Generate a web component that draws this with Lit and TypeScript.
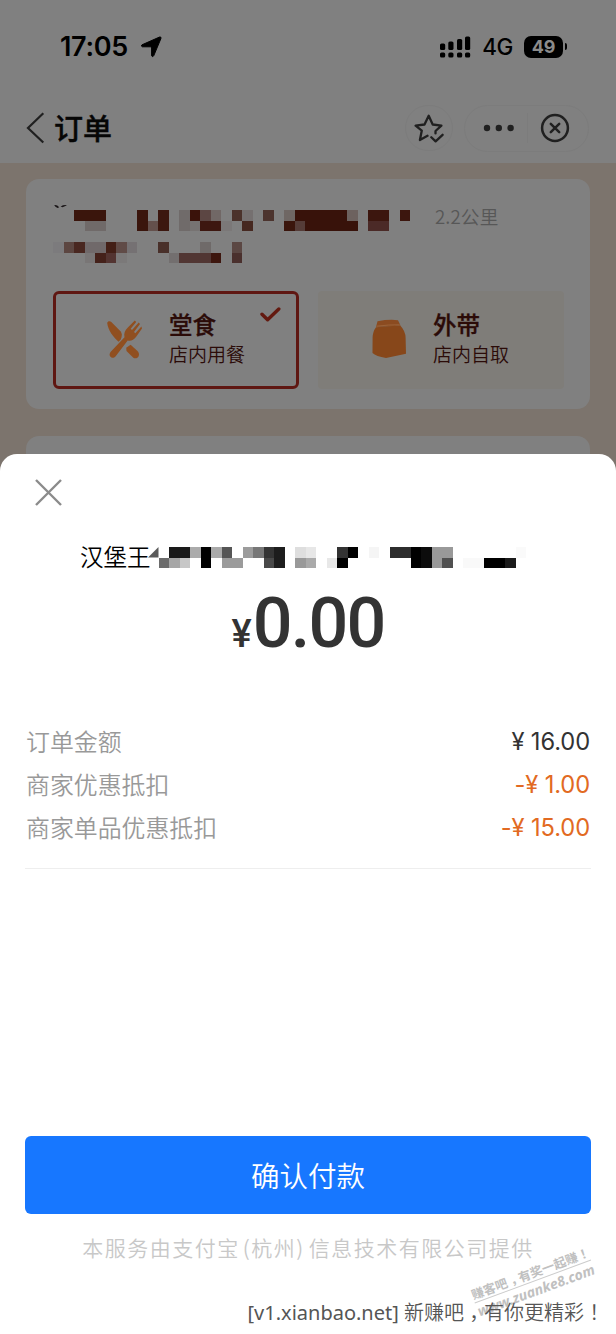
import { LitElement, html, css, svg } from "lit";
import { customElement, property } from "lit/decorators.js";

type Cell = [number, number, number, string];

const CELL = 10.5;

// Each cell: column, row, span in columns, fill.
const ADDRESS_TOP: Cell[] = [
  [2, 0, 3, "#3a150c"], [8, 0, 1, "#3a150c"], [10, 0, 1, "#3c170f"], [12, 0, 1, "#706b6a"],
  [13, 0, 1, "#3a120a"], [14, 0, 1, "#5c4643"], [15, 0, 1, "#716866"], [17, 0, 1, "#4b322b"],
  [18, 0, 1, "#757070"], [20, 0, 1, "#4c342e"], [22, 0, 1, "#6f6764"], [23, 0, 5, "#38120a"],
  [28, 0, 1, "#6d625f"], [30, 0, 2, "#3c160e"], [33, 0, 1, "#3c160e"],
  [3, 1, 2, "#706a69"], [8, 1, 1, "#3a150c"], [9, 1, 1, "#64504c"], [10, 1, 1, "#3c170f"],
  [12, 1, 1, "#706b6a"], [13, 1, 1, "#777372"], [14, 1, 2, "#3d1710"], [16, 1, 1, "#7b7878"],
  [18, 1, 1, "#462820"], [22, 1, 1, "#3a150c"], [23, 1, 1, "#553c38"], [24, 1, 5, "#38120a"],
  [30, 1, 2, "#4b2a27"],
];
const ADDRESS_BOTTOM: Cell[] = [
  [0, 0, 1, "#7c7b7d"], [1, 0, 1, "#5c4641"], [2, 0, 1, "#492720"], [3, 0, 2, "#70696a"],
  [5, 0, 1, "#431f16"], [6, 0, 1, "#604b47"], [7, 0, 1, "#757173"], [10, 0, 1, "#49302a"],
  [14, 0, 1, "#6f6a69"], [17, 0, 1, "#5b4743"],
  [3, 1, 1, "#797676"], [4, 1, 1, "#44211a"], [5, 1, 1, "#533431"], [6, 1, 1, "#7b7979"],
  [11, 1, 1, "#736f6f"], [12, 1, 3, "#513633"], [15, 1, 1, "#3d160e"], [17, 1, 1, "#4a302d"],
];
const SHOP_NAME: Cell[] = [
  [2, 0, 2, "#1a1a1a"], [4, 0, 1, "#ababab"], [5, 0, 1, "#000"], [6, 0, 1, "#aaa"],
  [7, 0, 1, "#555"], [9, 0, 1, "#9c9c9c"], [10, 0, 1, "#777"], [11, 0, 1, "#343434"],
  [12, 0, 1, "#1d1d1d"], [14, 0, 1, "#dedede"], [15, 0, 1, "#e7e7e7"], [18, 0, 1, "#333"],
  [19, 0, 1, "#000"], [21, 0, 1, "#f5f5f5"], [23, 0, 2, "#2d2d2d"], [25, 0, 1, "#000"],
  [26, 0, 1, "#0c0c0c"], [27, 0, 2, "#999"], [35, 0, 1, "#fafafa"],
  [1, 1, 1, "#6c6c6c"], [2, 1, 1, "#a6a6a6"], [3, 1, 1, "#c7c7c7"], [5, 1, 1, "#000"],
  [7, 1, 2, "#9b9b9b"], [11, 1, 1, "#494949"], [12, 1, 1, "#1d1d1d"], [14, 1, 1, "#999"],
  [15, 1, 1, "#aaa"], [17, 1, 1, "#e8e8e8"], [18, 1, 1, "#000"], [25, 1, 1, "#000"],
  [26, 1, 1, "#0c0c0c"], [27, 1, 1, "#999"], [28, 1, 1, "#505050"], [30, 1, 2, "#f9f9f9"],
  [32, 1, 2, "#000"], [34, 1, 1, "#1b1b1b"],
];

const cells = (list: Cell[]) =>
  list.map(
    ([c, r, n, fill]) =>
      svg`<rect x=${c * CELL} y=${r * CELL} width=${n * CELL} height=${CELL} fill=${fill}></rect>`
  );

@customElement("status-bar")
class StatusBar extends LitElement {
  static styles = css`
    :host { display: flex; align-items: center; height: 93px; box-sizing: border-box; padding: 0 49.5px 0 60px; color: #000; font-family: Inter, sans-serif; }
    .time { font-size: 27px; font-weight: 600; letter-spacing: -0.3px; }
    .arrow { margin-left: 12px; }
    .signal { margin-left: auto; }
    .net { margin-left: 11px; font-size: 22.5px; font-weight: 500; letter-spacing: -0.4px; }
    .battery { margin-left: 11px; width: 39px; height: 22px; line-height: 22px; border-radius: 7px; background: #000; color: #8b8b8b; text-align: center; font-size: 18px; font-weight: 700; letter-spacing: -0.3px; }
    .tip { margin-left: 1.5px; width: 2px; height: 7px; border-radius: 0 3px 3px 0; background: #000; }
  `;
  render() {
    return html`
      <span class="time">17:05</span>
      <svg class="arrow" width="22" height="22" viewBox="0 0 22 22"><path d="M19.6 1 Q21.6.6 20.9 2.6 L13.8 19.6 Q12.6 21.8 11.6 19.8 V12 Q11.6 10.8 10.4 10.8 H2.4 Q.4 10 2 8.8Z" stroke="#000" stroke-width="1" stroke-linejoin="round"/></svg>
      <svg class="signal" width="31" height="22" viewBox="0 0 31 22">
        <rect x="0" y="7.5" width="5.2" height="6.5" rx="1.6"/><rect x="8.3" y="5.5" width="5.2" height="8.5" rx="1.6"/>
        <rect x="17" y="3" width="5.2" height="11" rx="1.6"/><rect x="25" y="0.5" width="5.2" height="13.5" rx="1.6"/>
        <rect x="0" y="16.5" width="5.2" height="5" rx="1.6"/><rect x="8.3" y="16.5" width="5.2" height="5" rx="1.6"/>
        <rect x="17" y="16.5" width="5.2" height="5" rx="1.6"/><rect x="25" y="16.5" width="5.2" height="5" rx="1.6"/>
      </svg>
      <span class="net">4G</span><span class="battery">49</span><span class="tip"></span>`;
  }
}

@customElement("nav-bar")
class NavBar extends LitElement {
  static styles = css`
    :host { display: flex; align-items: center; height: 70px; box-sizing: border-box; padding: 0 27px 0 26px; }
    .title { margin: -2px 0 0 9px; font: 500 29px/40px "Noto Sans CJK SC", sans-serif; color: #060606; -webkit-text-stroke: 0.4px #060606; }
    .round { display: flex; align-items: center; justify-content: center; width: 48px; height: 46px; box-sizing: border-box; border: 1px solid #7c7c7c; border-radius: 24px; margin-left: auto; }
    .pill { display: flex; align-items: center; width: 125px; height: 47px; box-sizing: border-box; border: 1px solid #7c7c7c; border-radius: 24px; margin-left: 11px; }
    .half { display: flex; align-items: center; justify-content: center; width: 62px; height: 30px; padding-left: 6px; box-sizing: border-box; }
    .half + .half { border-left: 1px solid #7c7c7c; width: 54px; padding-left: 0; }
  `;
  render() {
    return html`
      <svg width="19" height="32" viewBox="0 0 19 32" fill="none" stroke="#202020" stroke-width="2.2"><path d="M17.3 1.3 2 16 17.3 30.5"/></svg>
      <span class="title">订单</span>
      <span class="round">
        <svg width="30" height="30" viewBox="0 0 30 30" fill="none" stroke="#202020" stroke-width="2.3" stroke-linejoin="round" stroke-linecap="round">
          <path d="M13.5 22.8 5.9 27 7.8 17.6 1.6 12.6 10.5 11.5 14.7 2.8 18.7 11.5 27.4 12.6 21.5 18V20.4"/>
          <path d="M17.3 24.2 21.6 28.4 28.6 21.8"/>
        </svg>
      </span>
      <span class="pill">
        <span class="half"><svg width="32" height="8" viewBox="0 0 32 8" fill="#202020"><circle cx="4" cy="4" r="3.2"/><circle cx="15.8" cy="4" r="3.2"/><circle cx="27.6" cy="4" r="3.2"/></svg></span>
        <span class="half"><svg width="30" height="30" viewBox="0 0 30 30" fill="none" stroke="#202020" stroke-width="2.5" stroke-linecap="round"><circle cx="15" cy="15" r="12.9"/><path d="M10.8 10.8 19.2 19.2M19.2 10.8 10.8 19.2"/></svg></span>
      </span>`;
  }
}

@customElement("dining-option")
class DiningOption extends LitElement {
  @property() heading = "";
  @property() note = "";
  @property() kind = "";
  @property({ type: Boolean, reflect: true }) selected = false;
  static styles = css`
    :host { position: relative; display: flex; width: 246px; height: 98px; box-sizing: border-box; padding: 18px 0 0 53px; border-radius: 4px; background: #7f7d79; font-family: "Noto Sans CJK SC", sans-serif; color: #2b0b08; }
    :host([selected]) { background: none; border: 3px solid #5f1712; border-radius: 6px; padding: 15px 0 0 50px; }
    .icon { flex: none; margin-top: 10px; }
    .text { margin-left: 25px; }
    :host(:not([selected])) .text { margin-left: 24px; }
    .heading { font-size: 23.5px; line-height: 31px; font-weight: 500; -webkit-text-stroke: 0.3px #2b0b08; white-space: nowrap; }
    .note { font-size: 19px; line-height: 27px; font-weight: 350; white-space: nowrap; }
    .tick { position: absolute; right: 15px; top: 13px; }
  `;
  render() {
    const cutlery = svg`
      <g fill="#904f20">
        <path d="M1.2 4 C1.6 2 4 1.8 5.6 3.2 L14.5 12.2 C16.3 14.2 16.2 17 14.8 20.6 L12.6 22.8 C7.4 18.6 2 11 1.2 4Z"/>
        <path d="M20.2 28.8 L24.6 25.8 31.5 32 C35.2 36.2 31.3 41 27.3 38.8 L20.5 32Z"/>
        <path d="M4.5 33 L18.5 18.2 C17.6 14.2 19 11.2 21.6 8.7 L28.8 1.6 30.2 3 24.7 9.8 26 11 32.7 3.6 34 5 28 13 29.3 14.2 35.4 7.6 36 9.4 30.2 17.8 C27.6 21 24.8 22.3 21.7 21.4 L9.5 37.5 C6.6 40.9 1.5 37.2 4.5 33Z"/>
      </g>`;
    const bag = svg`
      <path d="M6.5 2.2 Q18 .2 27 1.2 L29.5 6.4 Q18 7.6 5 8Z" fill="#8b4b20"/>
      <path d="M5 8.2 Q18 7.4 29.2 6.6 Q34.5 12 34.6 19 L35 34.8 15 39 Q5 37.3 1.5 34 L1.6 18.5 Q1.8 12.5 5 8.2Z" fill="#87471a"/>
      <path d="M5.5 7.2 Q18 5.6 28.8 5.8" stroke="#a06a40" stroke-width="0.8" fill="none"/>`;
    return html`
      <svg class="icon" width="38" height="41" viewBox="0 0 38 41">${this.kind === "bag" ? bag : cutlery}</svg>
      <div class="text"><div class="heading">${this.heading}</div><div class="note">${this.note}</div></div>
      ${this.selected
        ? html`<svg class="tick" width="21" height="16" viewBox="0 0 21 16" fill="none" stroke="#63190f" stroke-width="3.4" stroke-linecap="round" stroke-linejoin="round"><path d="M2 7.2 7.6 12.8 18.8 2"/></svg>`
        : null}`;
  }
}

@customElement("order-page")
class OrderPage extends LitElement {
  static styles = css`
    :host { display: block; height: 309px; box-sizing: border-box; overflow: hidden; padding: 16px 26px 0; background: #7c746d; }
    .card { height: 230px; box-sizing: border-box; padding: 23px 26px 0 27px; border-radius: 13px; background: #808080; }
    .address { display: flex; height: 89px; }
    .masked { display: block; flex: none; }
    .distance { margin-left: 18px; font: 350 18.7px/28px "Noto Sans CJK SC", sans-serif; color: #575757; letter-spacing: 0.1px; white-space: nowrap; }
    .options { display: flex; justify-content: space-between; width: 511px; }
    .next { margin-top: 27px; height: 60px; border-radius: 13px; background: #808080; }
  `;
  render() {
    return html`
      <div class="card">
        <div class="address">
          <svg class="masked" width="364" height="64" viewBox="0 0 364 64" shape-rendering="crispEdges">
            <path d="M1.2 3 Q4 2.4 6.2 5.2 L4.6 6 Q2 5.2 1.2 3Z M7.6 4.4 Q11 2.4 14 3.2 L9.6 5.2Z" fill="#1b1618" shape-rendering="auto"/>
            <g transform="translate(0 8.3)">${cells(ADDRESS_TOP)}</g>
            <g transform="translate(0 40)">${cells(ADDRESS_BOTTOM)}</g>
          </svg>
          <span class="distance">2.2公里</span>
        </div>
        <div class="options">
          <dining-option selected kind="cutlery" heading="堂食" note="店内用餐"></dining-option>
          <dining-option kind="bag" heading="外带" note="店内自取"></dining-option>
        </div>
      </div>
      <div class="next"></div>`;
  }
}

@customElement("payment-sheet")
class PaymentSheet extends LitElement {
  private lines = [
    { label: "订单金额", value: "¥ 16.00", off: false },
    { label: "商家优惠抵扣", value: "-¥ 1.00", off: true },
    { label: "商家单品优惠抵扣", value: "-¥ 15.00", off: true },
  ];
  static styles = css`
    :host { position: relative; display: flex; flex-direction: column; flex: 1; margin-top: -18px; padding: 0 25px; box-sizing: border-box; border-radius: 17px 17px 0 0; background: #fff; font-family: "Noto Sans CJK SC", sans-serif; }
    .close { display: block; margin: 24px 0 0 9px; }
    .shop { display: flex; height: 34px; margin: 32px 0 0 55px; font-size: 23.5px; line-height: 34px; font-weight: 350; color: #000; }
    .mask { display: block; margin: 8px 0 0 -3px; }
    .total { display: flex; justify-content: center; align-items: baseline; height: 82px; margin-top: 9px; font-family: Roboto, sans-serif; color: #333; }
    .yen { font-size: 38px; line-height: 82px; font-weight: 500; margin-right: 1px; }
    .sum { font-size: 70px; line-height: 82px; font-weight: 500; letter-spacing: -1.8px; }
    .lines { height: 148px; margin-top: 56px; border-bottom: 1px solid #eee; }
    .line { display: flex; justify-content: space-between; height: 43px; padding: 0 1px; font-size: 23.9px; font-weight: 350; color: #999; }
    .label { line-height: 41px; }
    .value { line-height: 43px; font-family: Inter, sans-serif; font-size: 23.7px; font-weight: 400; color: #333; letter-spacing: -0.1px; }
    .off { color: #e26a22; }
    .pay { display: block; flex: none; width: 566px; height: 78px; margin-top: 267px; padding: 0; border: 0; border-radius: 6px; background: #1777ff; color: #fff; font: 350 28.5px/78px "Noto Sans CJK SC", sans-serif; }
    .provider { margin-top: 17px; text-align: center; font-size: 21px; line-height: 32px; color: #c8c8c8; font-weight: 350; letter-spacing: 1.5px; white-space: nowrap; }
    .city { margin: 0 4px 0 3px; }
  `;
  render() {
    return html`
      <svg class="close" width="29" height="29" viewBox="0 0 29 29" stroke="#8b8b8b" stroke-width="2.4"><path d="M2 2 27 27M27 2 2 27"/></svg>
      <div class="shop">
        <span>汉堡王</span>
        <svg class="mask" width="380" height="21" viewBox="0 0 380 21" shape-rendering="crispEdges">
          <path d="M0 10.5 10.5 0V10.5Z" fill="#5a5a5a" shape-rendering="auto"/>${cells(SHOP_NAME)}
        </svg>
      </div>
      <div class="total"><span class="yen">¥</span><span class="sum">0.00</span></div>
      <div class="lines">
        ${this.lines.map((l) => html`<div class="line"><span class="label">${l.label}</span><span class="value ${l.off ? "off" : ""}">${l.value}</span></div>`)}
      </div>
      <button class="pay">确认付款</button>
      <div class="provider">本服务由支付宝<span class="city">(杭州)</span>信息技术有限公司提供</div>`;
  }
}

@customElement("app-root")
class AppRoot extends LitElement {
  static styles = css`
    :host { position: relative; display: flex; flex-direction: column; width: 616px; height: 1334px; overflow: hidden; background: #808080; }
    .stamp { position: absolute; left: 471px; top: 1265px; width: 124px; transform: rotate(-20.3deg); font-family: "Noto Sans CJK SC", sans-serif; color: #c0c0c0; white-space: nowrap; }
    .slogan { font-size: 12.5px; line-height: 16px; font-weight: 700; border-bottom: 1px solid #ccc; text-align: center; }
    .site { font: italic 700 14px/17px "Open Sans", sans-serif; text-align: center; }
    .credit { position: absolute; right: 12px; top: 1297px; font: 350 20px/30px "Noto Sans CJK SC", sans-serif; color: #555; white-space: nowrap; }
    .host { font: 400 20px/30px "Noto Sans", sans-serif; }
    .mark { display: inline-block; box-sizing: border-box; width: 1em; padding-left: 0.26em; }
  `;
  render() {
    return html`
      <status-bar></status-bar>
      <nav-bar></nav-bar>
      <order-page></order-page>
      <payment-sheet></payment-sheet>
      <div class="stamp"><div class="slogan">赚客吧<span class="mark">，</span>有奖一起赚<span class="mark">！</span></div><div class="site">www.zuanke8.com</div></div>
      <div class="credit"><span class="host">[v1.xianbao.net] </span>新赚吧<span class="mark">，</span>有你更精彩<span class="mark">！</span></div>`;
  }
}
